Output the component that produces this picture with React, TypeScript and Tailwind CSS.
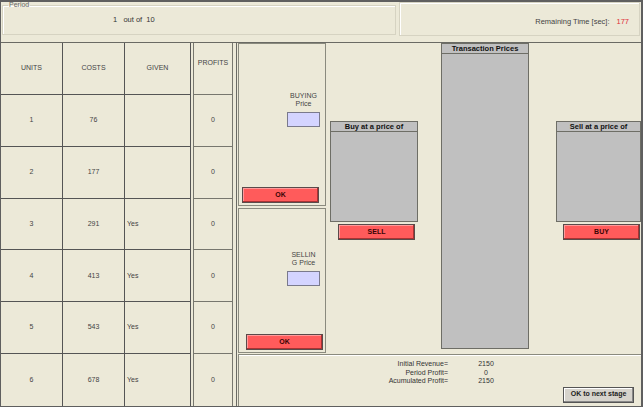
import React from 'react';

const units = [
  { unit: 1, cost: 76, given: '' },
  { unit: 2, cost: 177, given: '' },
  { unit: 3, cost: 291, given: 'Yes' },
  { unit: 4, cost: 413, given: 'Yes' },
  { unit: 5, cost: 543, given: 'Yes' },
  { unit: 6, cost: 678, given: 'Yes' },
];

function RedButton({ label, className }: { label: string; className: string }) {
  return (
    <button
      className={`h-[16px] bg-[#ff5b5b] border border-[#5a4a4a] shadow-[inset_-1px_-1px_0_#a33,inset_1px_1px_0_#ff9a9a] text-[7px] font-bold text-[#3a0505] flex items-center justify-center ${className}`}
    >
      {label}
    </button>
  );
}

function ListBox({ title, className }: { title: string; className: string }) {
  return (
    <div className={`flex flex-col bg-[#c0c0c0] border border-[#6e6e66] ${className}`}>
      <div className="h-[10px] border-b border-[#6e6e66] flex items-center justify-center text-[7.5px] font-bold text-[#111] leading-none">
        {title}
      </div>
    </div>
  );
}

function PricePanel({ lines, button, className }: { lines: string[]; button: string; className: string }) {
  return (
    <div className={`border border-[#8a8a7e] flex flex-col ${className}`}>
      <div className="flex-1 flex flex-col items-end pr-[5px] pt-[46px]">
        <div className="w-[33px] flex flex-col items-center">
          {lines.map(l => (
            <span key={l} className="text-[7px] leading-[8px] text-[#444]">
              {l}
            </span>
          ))}
          <div className="mt-[8px] w-[33px] h-[15px] bg-[#d4d4ff] border border-[#7a7a8c]" />
        </div>
      </div>
      {button}
    </div>
  );
}

export default function App() {
  return (
    <div
      className="w-[643px] h-[407px] bg-[#ece9d8] border-t-2 border-l border-r-2 border-b border-[#5f5f5f] flex flex-col overflow-hidden text-[#444]"
      style={{ fontFamily: '"Liberation Sans", Arial, sans-serif' }}
    >
      {/* top bar */}
      <div className="h-[40px] flex gap-[3px] pl-[1px] pr-[1px]">
        <fieldset className="w-[394px] h-[34px] border border-[#d6d3c2] shadow-[inset_1px_1px_0_#fff] px-[5px] -mt-[1px]">
          <legend className="text-[7px] leading-[8px] text-[#666] px-[1px]">Period</legend>
          <div className="pl-[105px] pt-[5px] text-[7.5px] text-[#333]">1&nbsp;&nbsp;&nbsp;out of&nbsp;&nbsp;10</div>
        </fieldset>
        <div className="flex-1 h-[34px] border border-[#d6d3c2] shadow-[inset_1px_1px_0_#fff] flex items-center justify-end pr-[10px] pt-[6px] text-[7.5px] text-[#444]">
          Remaining Time [sec]:<span className="ml-[7px] text-[#e0303a]">177</span>
        </div>
      </div>

      {/* main area */}
      <div className="flex-1 flex border-t border-[#6a6a64]">
        {/* units table */}
        <div className="w-[190px] grid grid-cols-[62px_62px_66px] grid-rows-7 border-r border-[#8a8a80]">
          {['UNITS', 'COSTS', 'GIVEN'].map(h => (
            <div key={h} className="border-r border-b border-[#555] flex items-center justify-center text-[7px] text-[#444] pt-[0px]">
              {h}
            </div>
          ))}
          {units.map((u, i) => (
            <React.Fragment key={u.unit}>
              <div className={`border-r border-[#555] ${i < 5 ? 'border-b' : ''} flex items-center justify-center text-[7px]`}>
                {u.unit}
              </div>
              <div className={`border-r border-[#555] ${i < 5 ? 'border-b' : ''} flex items-center justify-center text-[7px]`}>
                {u.cost}
              </div>
              <div className={`border-r border-[#555] ${i < 5 ? 'border-b' : ''} flex items-center pl-[2px] text-[7px]`}>
                {u.given}
              </div>
            </React.Fragment>
          ))}
        </div>

        {/* profits */}
        <div className="w-[46px] pl-[2px] pr-[3px] border-r border-[#6a6a64] flex">
          <div className="flex-1 grid grid-rows-7 border-x border-[#77776e]">
            <div className="border-b border-[#77776e] flex justify-center pt-[15px] text-[7px]">PROFITS</div>
            {units.map((u, i) => (
              <div key={u.unit} className={`${i < 5 ? 'border-b' : ''} border-[#77776e] flex items-center justify-center text-[7px]`}>
                0
              </div>
            ))}
          </div>
        </div>

        {/* trading area */}
        <div className="flex-1 flex flex-col pl-[1px]">
          <div className="flex h-[311px]">
            <div className="w-[88px] flex flex-col gap-[2px]">
              <div className="h-[163px] border border-[#8a8a7e] flex flex-col">
                <div className="flex-1 flex flex-col items-end pr-[5px] pt-[48px]">
                  <div className="w-[33px] flex flex-col items-center">
                    <span className="text-[7px] leading-[8px] text-[#444]">BUYING</span>
                    <span className="text-[7px] leading-[8px] text-[#444]">Price</span>
                    <div className="mt-[4px] w-[33px] h-[15px] bg-[#d4d4ff] border border-[#7a7a8c]" />
                  </div>
                </div>
                <RedButton label="OK" className="w-[77px] ml-[3px] mb-[2px]" />
              </div>
              <div className="h-[145px] border border-[#8a8a7e] flex flex-col">
                <div className="flex-1 flex flex-col items-end pr-[5px] pt-[42px]">
                  <div className="w-[33px] flex flex-col items-center">
                    <span className="text-[7px] leading-[8px] text-[#444]">SELLIN</span>
                    <span className="text-[7px] leading-[8px] text-[#444]">G Price</span>
                    <div className="mt-[4px] w-[33px] h-[15px] bg-[#d4d4ff] border border-[#7a7a8c]" />
                  </div>
                </div>
                <RedButton label="OK" className="w-[77px] ml-[7px] mb-[2px]" />
              </div>
            </div>

            <div className="w-[88px] ml-[4px] pt-[78px] flex flex-col">
              <ListBox title="Buy at a price of" className="h-[101px]" />
              <RedButton label="SELL" className="w-[77px] ml-[8px] mt-[2px]" />
            </div>

            <div className="w-[88px] ml-[23px]">
              <ListBox title="Transaction Prices" className="h-[306px]" />
            </div>

            <div className="flex-1 ml-[27px] pt-[78px] flex flex-col">
              <ListBox title="Sell at a price of" className="h-[101px]" />
              <RedButton label="BUY" className="w-[77px] ml-[7px] mt-[2px]" />
            </div>
          </div>

          {/* totals */}
          <div className="flex-1 border-t border-l border-[#8a8a7e] shadow-[inset_0_1px_0_#fff] flex flex-col pt-[5px]">
            <div className="flex text-[7px] leading-[8.5px] text-[#333]">
              <div className="w-[209px] flex flex-col items-end">
                <span>Initial Revenue=</span>
                <span>Period Profit=</span>
                <span>Acumulated Profit=</span>
              </div>
              <div className="w-[76px] flex flex-col items-center">
                <span>2150</span>
                <span>0</span>
                <span>2150</span>
              </div>
            </div>
            <div className="flex justify-end pr-[7px] mt-[1px]">
              <button className="w-[71px] h-[16px] bg-[#d6d3cc] border border-[#555] shadow-[inset_-1px_-1px_0_#888,inset_1px_1px_0_#fff] text-[7px] font-bold text-[#222]">
                OK to next stage
              </button>
            </div>
          </div>
        </div>
      </div>
    </div>
  );
}
